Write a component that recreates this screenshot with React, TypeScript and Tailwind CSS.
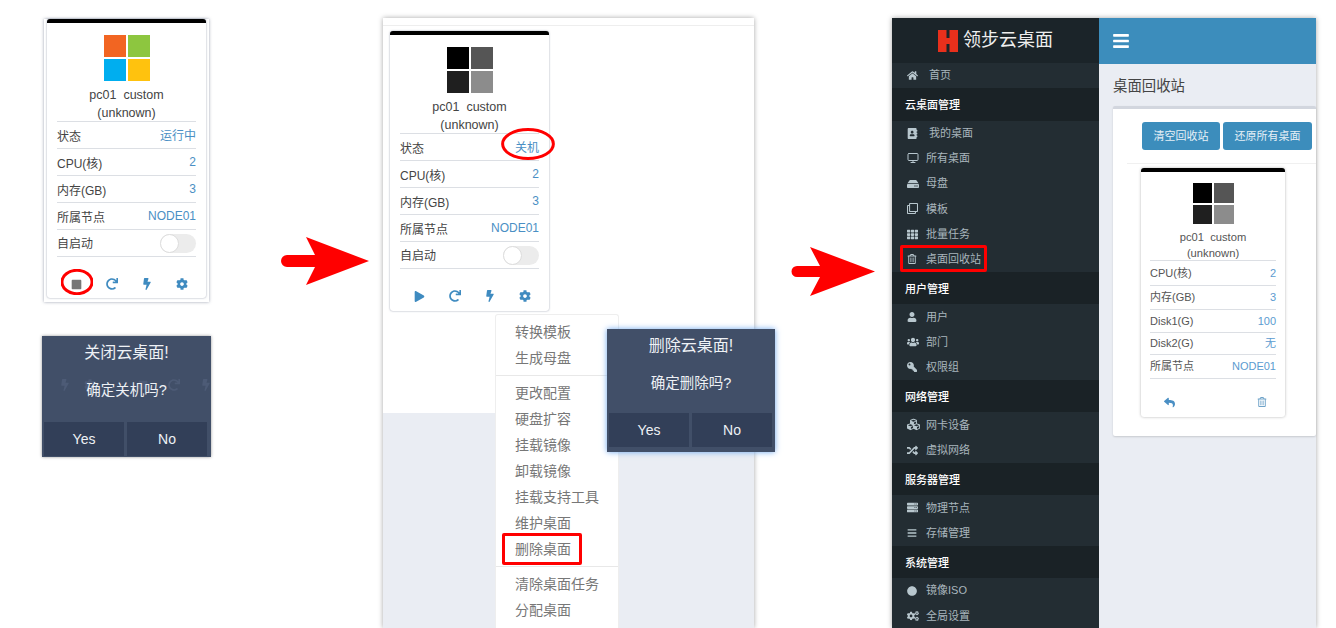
import React from "react";
import { Monitor } from "lucide-react";
import {
  FaAddressBook, FaBars, FaBolt, FaCircle, FaCog, FaCogs, FaCubes, FaHdd, FaHome, FaKey, FaPlay, FaRandom,
  FaRedo, FaRegClone, FaRegTrashAlt, FaReply, FaServer, FaStop, FaTh, FaUser, FaUsers,
} from "react-icons/fa";

const WIN = ["#f26522", "#8dc63f", "#00aeef", "#ffc20e"];
const DARK = ["#000000", "#555555", "#1f1f1f", "#8c8c8c"];

function Tiles({ colors, size }: { colors: string[]; size: "lg" | "sm" }) {
  return (
    <div className={size === "lg" ? "grid grid-cols-2 gap-[2px] w-[46px] h-[46px]" : "grid grid-cols-2 gap-[2px] w-[41px] h-[41px]"}>
      {colors.map((c) => (
        <div key={c} style={{ backgroundColor: c }} />
      ))}
    </div>
  );
}

function Row({ label, value, cjk }: { label: string; value: string; cjk?: boolean }) {
  return (
    <div className="flex justify-between h-[27px] border-b border-[#dcdfe4] text-[12px] text-[#444]">
      <span className="pt-[6px] leading-[18px]">{label}</span>
      <span className={cjk ? "pt-[5px] leading-[18px] text-[#4a8fc4]" : "pt-[4px] leading-[18px] text-[#4a8fc4]"}>{value}</span>
    </div>
  );
}

function Toggle() {
  return (
    <div className="flex justify-between items-center h-[27px] border-b border-[#dcdfe4] text-[12px] text-[#444]">
      <span className="pt-[2px]">自启动</span>
      <div className="w-[36px] h-[19px] rounded-full bg-[#ececec] flex">
        <div className="w-[19px] h-[19px] rounded-full bg-white border border-[#dddddd]" />
      </div>
    </div>
  );
}

function VMCard({ colors, status, first, height }: { colors: string[]; status: string; first: React.ReactNode; height: string }) {
  return (
    <div className={`${height} w-[159px] bg-white border-t-[4px] border-t-black rounded-[3px] shadow-[0_0_2px_rgba(60,70,100,0.55)] flex flex-col`}>
      <div className="flex justify-center pt-[12px]">
        <Tiles colors={colors} size="lg" />
      </div>
      <div className="pt-[5px] text-center text-[12.5px] leading-[18px] text-[#444] h-[40px]">
        <div className="whitespace-pre">pc01  custom</div>
        <div>(unknown)</div>
      </div>
      <div className="mx-[10px] border-t border-[#dcdfe4]">
        <Row label="状态" value={status} cjk />
        <Row label="CPU(核)" value="2" />
        <Row label="内存(GB)" value="3" />
        <Row label="所属节点" value="NODE01" />
        <Toggle />
      </div>
      <div className="grid grid-cols-[35px_35px_35px_35px] px-[12px] pt-[20px] text-[#3f8bc0]">
        <div className="flex justify-center items-center h-[14px]">{first}</div>
        <div className="flex justify-center items-center h-[14px]"><FaRedo size={12} /></div>
        <div className="flex justify-center items-center h-[14px]"><FaBolt size={12} /></div>
        <div className="flex justify-center items-center h-[14px]"><FaCog size={12} /></div>
      </div>
    </div>
  );
}

function Dialog({ title, message, className, ghost }: { title: string; message: string; className: string; ghost?: boolean }) {
  return (
    <div className={`absolute bg-[#414f68] text-[#eef1f5] flex flex-col ${className}`}>
      {ghost && (
        <div className="absolute left-[17px] top-[43px] flex items-center text-[#4d5b76]">
          <FaBolt size={12} className="mr-[13px]" />
          <FaCog size={12} className="mr-[42px]" />
          <FaStop size={10} className="mr-[20px]" />
          <FaRedo size={12} className="mr-[20px]" />
          <FaBolt size={12} />
        </div>
      )}
      <div className="relative text-center text-[16px] leading-[20px] pt-[7px] h-[38px]">{title}</div>
      <div className="relative text-center text-[14.5px] leading-[20px] pt-[6px] flex-1">{message}</div>
      <div className="relative grid grid-cols-[80px_80px] gap-[3px] px-[2px] pb-[1px] text-[14px] font-medium">
        <div className="h-[34px] bg-[#323f58] flex items-center justify-center">Yes</div>
        <div className="h-[34px] bg-[#323f58] flex items-center justify-center">No</div>
      </div>
    </div>
  );
}

function Arrow({ className, d, box }: { className: string; d: string; box: string }) {
  return (
    <svg viewBox={box} className={`absolute ${className}`}>
      <path d={d} fill="#ff0000" />
    </svg>
  );
}

function Ellipse({ className }: { className: string }) {
  return (
    <svg viewBox="0 0 100 100" preserveAspectRatio="none" className={`absolute ${className}`}>
      <ellipse cx="50" cy="50" rx="47" ry="45" fill="none" stroke="#ff0000" strokeWidth="3" vectorEffect="non-scaling-stroke" />
    </svg>
  );
}

function MenuItem({ children }: { children: string }) {
  return <div className="h-[26px] leading-[26px] pl-[19px] text-[14px] text-[#777]">{children}</div>;
}

function Section({ children }: { children: string }) {
  return <div className="h-[32.5px] bg-[#1a2226] flex items-center pl-[13px] pt-[2px] text-[11px] font-medium text-white">{children}</div>;
}

function Nav({ icon, children, wide }: { icon: React.ReactNode; children: string; wide?: boolean }) {
  return (
    <div className="h-[25.2px] flex items-center pl-[15px] text-[11px] text-[#a9b6bd]">
      <span className={wide ? "w-[22px] flex items-center text-[#b8c7ce]" : "w-[19px] flex items-center text-[#b8c7ce]"}>{icon}</span>
      <span>{children}</span>
    </div>
  );
}

function SmallRow({ label, value, h }: { label: string; value: string; h: string }) {
  return (
    <div className={`flex justify-between items-center border-b border-[#dcdfe4] text-[11px] text-[#555] ${h}`}>
      <span>{label}</span>
      <span className="text-[#5b9bd0]">{value}</span>
    </div>
  );
}

export default function App() {
  return (
    <div className="relative w-[1336px] h-[628px] overflow-hidden bg-white [font-family:'Liberation_Sans','Noto_Sans_CJK_SC',sans-serif]">
      {/* Panel 1 */}
      <div className="absolute left-[44px] top-[19px] w-[165px] h-[283px] bg-white px-[3px] shadow-[0_0_3px_rgba(60,70,100,0.5)]">
        <VMCard colors={WIN} status="运行中" height="h-[279px]" first={<FaStop size={11} className="text-[#777]" />} />
      </div>
      <Ellipse className="left-[61px] top-[269px] w-[32px] h-[26px]" />
      <Dialog
        title="关闭云桌面!"
        message="确定关机吗?"
        ghost
        className="left-[42px] top-[336px] w-[169px] h-[121px] shadow-[0_0_3px_rgba(0,0,0,0.4)]"
      />

      <Arrow
        box="0 0 88 48"
        d="M6 18 H34 L25 0 L88 24 L25 48 L34 30 H6 A6 6 0 0 1 6 18 Z"
        className="left-[281px] top-[237px] w-[88px] h-[48px]"
      />

      {/* Panel 2 */}
      <div className="absolute left-[383px] top-[18px] w-[371px] h-[610px] flex flex-col bg-[#eaedf3] shadow-[0_0_5px_rgba(0,0,0,0.35)]">
        <div className="h-[395px] bg-white">
          <div className="h-[8px] border-b border-[#eeeeee]" />
          <div className="pl-[7px] pt-[5px]">
            <VMCard colors={DARK} status="关机" height="h-[280px]" first={<FaPlay size={11} />} />
          </div>
        </div>
      </div>
      <Ellipse className="left-[501px] top-[128px] w-[54px] h-[32px]" />
      <div className="absolute left-[495px] top-[314px] w-[124px] h-[314px] overflow-hidden bg-white border border-[#eeeeee] border-b-0 rounded-t-[3px] py-[4px]">
        <MenuItem>转换模板</MenuItem>
        <MenuItem>生成母盘</MenuItem>
        <div className="h-px bg-[#e8e8e8] my-[4px]" />
        <MenuItem>更改配置</MenuItem>
        <MenuItem>硬盘扩容</MenuItem>
        <MenuItem>挂载镜像</MenuItem>
        <MenuItem>卸载镜像</MenuItem>
        <MenuItem>挂载支持工具</MenuItem>
        <MenuItem>维护桌面</MenuItem>
        <MenuItem>删除桌面</MenuItem>
        <div className="h-px bg-[#e8e8e8] my-[4px]" />
        <MenuItem>清除桌面任务</MenuItem>
        <MenuItem>分配桌面</MenuItem>
      </div>
      <div className="absolute left-[502px] top-[533px] w-[80px] h-[32px] border-[3px] border-[#ff0000] rounded-[2px]" />
      <Dialog
        title="删除云桌面!"
        message="确定删除吗?"
        className="left-[607px] top-[329px] w-[168px] h-[123px] pb-[4px] shadow-[0_0_6px_#6ea8f0]"
      />

      <Arrow
        box="0 0 84 49"
        d="M6 19 H29 L19 0 L84 24.5 L19 49 L29 30 H6 A5.5 5.5 0 0 1 6 19 Z"
        className="left-[791px] top-[247px] w-[84px] h-[49px]"
      />

      {/* Panel 3 */}
      <div className="absolute left-[892px] top-[18px] w-[424px] h-[610px] flex bg-[#eaedf3] shadow-[0_0_5px_rgba(0,0,0,0.35)]">
        <div className="w-[207px] bg-[#232d33] shrink-0">
          <div className="h-[45px] bg-[#1b2429] flex items-center pl-[46px]">
            <svg viewBox="0 0 20 22" className="w-[20px] h-[22px] mr-[5px]">
              <path d="M0 0 H8.5 V8 H11.5 V0 H20 V22 H11.5 V14 H8.5 V22 H0 Z" fill="#e8301c" />
            </svg>
            <span className="text-[18px] text-[#eeeeee]">领步云桌面</span>
          </div>
          <Nav wide icon={<FaHome size={11} />}>首页</Nav>
          <Section>云桌面管理</Section>
          <Nav wide icon={<FaAddressBook size={11} />}>我的桌面</Nav>
          <Nav icon={<Monitor size={12} strokeWidth={2} />}>所有桌面</Nav>
          <Nav icon={<FaHdd size={12} />}>母盘</Nav>
          <Nav icon={<FaRegClone size={11} />}>模板</Nav>
          <Nav icon={<FaTh size={11} />}>批量任务</Nav>
          <Nav icon={<FaRegTrashAlt size={10} />}>桌面回收站</Nav>
          <Section>用户管理</Section>
          <Nav icon={<FaUser size={10} />}>用户</Nav>
          <Nav icon={<FaUsers size={12} />}>部门</Nav>
          <Nav icon={<FaKey size={10} className="-scale-x-100" />}>权限组</Nav>
          <Section>网络管理</Section>
          <Nav icon={<FaCubes size={13} />}>网卡设备</Nav>
          <Nav icon={<FaRandom size={11} />}>虚拟网络</Nav>
          <Section>服务器管理</Section>
          <Nav icon={<FaServer size={11} />}>物理节点</Nav>
          <Nav icon={<FaBars size={10} />}>存储管理</Nav>
          <Section>系统管理</Section>
          <Nav icon={<FaCircle size={10} />}>镜像ISO</Nav>
          <Nav icon={<FaCogs size={12} />}>全局设置</Nav>
        </div>
        <div className="flex-1 min-w-0 flex flex-col">
          <div className="h-[46px] bg-[#3c8dbc] flex items-center pl-[13px] text-white">
            <FaBars size={18} />
          </div>
          <div className="pl-[14px] pt-[12px]">
            <div className="h-[30px] text-[14.4px] leading-[20px] text-[#444]">桌面回收站</div>
            <div className="h-[330px] bg-white border-t-[3px] border-t-[#d2d6de] rounded-[2px] shadow-[0_1px_2px_rgba(0,0,0,0.15)]">
              <div className="flex gap-[3px] pl-[29px] pt-[13px] text-[11px] text-[#e6f0f7]">
                <div className="w-[78px] h-[28px] rounded-[3px] bg-[#3c8dbc] flex items-center justify-center">清空回收站</div>
                <div className="w-[89px] h-[28px] rounded-[3px] bg-[#3c8dbc] flex items-center justify-center">还原所有桌面</div>
              </div>
              <div className="ml-[14px] mt-[13px] h-px bg-[#f0f0f0]" />
              <div className="ml-[28px] mt-[4px] w-[144px] h-[249px] border-t-[4px] border-t-black rounded-[3px] bg-white shadow-[0_0_3px_rgba(0,0,0,0.3)] flex flex-col">
                <div className="flex justify-center pt-[11px]">
                  <Tiles colors={DARK} size="sm" />
                </div>
                <div className="pt-[5px] h-[36px] text-center text-[11.2px] leading-[16px] text-[#555]">
                  <div className="whitespace-pre">pc01  custom</div>
                  <div>(unknown)</div>
                </div>
                <div className="mx-[9px] border-t border-[#dcdfe4]">
                  <SmallRow label="CPU(核)" value="2" h="h-[25px]" />
                  <SmallRow label="内存(GB)" value="3" h="h-[24px]" />
                  <SmallRow label="Disk1(G)" value="100" h="h-[23px]" />
                  <SmallRow label="Disk2(G)" value="无" h="h-[22px]" />
                  <SmallRow label="所属节点" value="NODE01" h="h-[24px]" />
                </div>
                <div className="flex justify-between pl-[23px] pr-[18px] pt-[18px] text-[#4a8fc4]">
                  <FaReply size={11} />
                  <FaRegTrashAlt size={10} className="text-[#6fa3c9]" />
                </div>
              </div>
            </div>
          </div>
        </div>
      </div>
      <div className="absolute left-[900px] top-[245px] w-[87px] h-[27px] border-[3px] border-[#ff0000] rounded-[2px]" />
    </div>
  );
}
